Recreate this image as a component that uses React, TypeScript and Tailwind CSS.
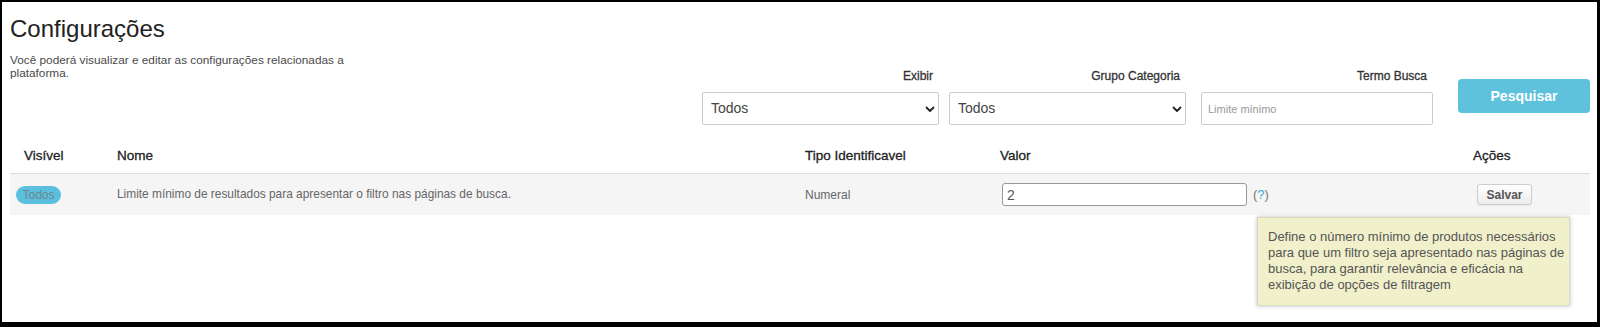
import { ChangeEvent, useState } from 'react';

interface Filter {
  label: string;
  width: string;
  kind: 'select' | 'input';
}

const filters: Filter[] = [
  { label: 'Exibir', width: 'w-[237px]', kind: 'select' },
  { label: 'Grupo Categoria', width: 'w-[237px]', kind: 'select' },
  { label: 'Termo Busca', width: 'w-[232px]', kind: 'input' },
];

function Chevron() {
  return (
    <svg
      className="pointer-events-none absolute right-[4px] top-[14px]"
      width="10"
      height="7"
      viewBox="0 0 10 7"
      fill="none"
    >
      <path d="M1.5 1.5 5 5l3.5-3.5" stroke="#222" strokeWidth="1.8" strokeLinecap="round" strokeLinejoin="round" />
    </svg>
  );
}

function FilterField({ filter }: { filter: Filter }) {
  return (
    <div className={`flex flex-col ${filter.width}`}>
      <label className="pr-[6px] text-right text-[12px] leading-4 font-normal text-[#333] [-webkit-text-stroke:0.3px_#333]">
        {filter.label}
      </label>
      <div className="relative mt-[8px]">
        {filter.kind === 'select' ? (
          <>
            <select className="h-[33px] w-full appearance-none rounded-[2px] border border-[#ccc] bg-white pl-[8px] text-[14px] font-normal text-[#444] outline-none">
              <option>Todos</option>
            </select>
            <Chevron />
          </>
        ) : (
          <input
            placeholder="Limite mínimo"
            className="h-[33px] w-full rounded-[2px] border border-[#ccc] bg-white pl-[6px] text-[11px] text-[#333] outline-none placeholder:text-[#999]"
          />
        )}
      </div>
    </div>
  );
}

export default function App() {
  const [valor, setValor] = useState('2');

  return (
    <div
      className="h-[327px] overflow-hidden border-t-2 border-l-2 border-r-[3px] border-b-[5px] border-black bg-white pl-[8px] pr-[7px] text-[#333]"
      style={{ fontFamily: '"Liberation Sans", Arial, sans-serif' }}
    >
      <h1 className="mt-[15px] text-[24px] leading-6 font-normal text-[#222]">Configurações</h1>

      <div className="flex items-start justify-between">
        <p className="mt-[13px] w-[350px] text-[11.8px] leading-[13px] text-[#4a4a4a]">
          Você poderá visualizar e editar as configurações relacionadas a plataforma.
        </p>

        <div className="mt-[27px] flex items-start">
          <FilterField filter={filters[0]} />
          <div className="ml-[10px]">
            <FilterField filter={filters[1]} />
          </div>
          <div className="ml-[15px]">
            <FilterField filter={filters[2]} />
          </div>
          <button className="ml-[25px] mt-[11px] h-[34px] w-[132px] rounded-[4px] bg-[#5fc2dd] text-[14px] font-bold text-white">
            Pesquisar
          </button>
        </div>
      </div>

      <div className="mt-[15px]">
        <div className="grid h-[34px] grid-cols-[99px_688px_195px_473px_1fr] items-center border-b border-[#ddd] text-[13.5px] font-normal text-[#222] [-webkit-text-stroke:0.3px_#222]">
          <div className="pl-[14px]">Visível</div>
          <div className="pl-[8px]">Nome</div>
          <div className="pl-[8px]">Tipo Identificavel</div>
          <div className="pl-[8px]">Valor</div>
          <div className="pl-[8px]">Ações</div>
        </div>

        <div className="relative grid h-[41px] grid-cols-[99px_688px_195px_473px_1fr] items-center bg-[#f5f5f5] text-[12px] text-[#666]">
          <div className="pl-[6px]">
            <span className="inline-flex h-[18px] w-[45px] items-center justify-center rounded-full bg-[#5bc0de] text-[12px] text-[#6a8790]">
              Todos
            </span>
          </div>
          <div className="pl-[8px] text-[11.9px]">
            Limite mínimo de resultados para apresentar o filtro nas páginas de busca.
          </div>
          <div className="pl-[8px]">Numeral</div>
          <div className="flex items-center pl-[10px]">
            <input
              value={valor}
              onChange={(e: ChangeEvent<HTMLInputElement>) => setValor(e.target.value)}
              className="h-[23px] w-[245px] rounded-[3px] border border-[#999] bg-white pl-[4px] text-[14px] text-[#555] outline-none"
            />
            <span className="ml-[6px] text-[13px] text-[#777]">
              (<span className="text-[#3ba9d3]">?</span>)
            </span>
          </div>
          <div className="pl-[12px]">
            <button className="h-[21px] w-[55px] rounded-[3px] border border-[#ccc] bg-gradient-to-b from-white to-[#ececec] text-[12px] font-bold text-[#555] shadow-[0_1px_1px_rgba(0,0,0,0.06)]">
              Salvar
            </button>
          </div>

          <div className="absolute left-[1247px] top-[43px] w-[313px] border border-[#d8d8c4] bg-[#f0f0cb] pl-[10px] pr-[3px] pt-[11px] pb-[12px] text-[13px] leading-4 text-[#555] shadow-[0_0_4px_rgba(0,0,0,0.25)]">
            Define o número mínimo de produtos necessários para que um filtro seja apresentado nas páginas de busca, para
            garantir relevância e eficácia na exibição de opções de filtragem
          </div>
        </div>
      </div>
    </div>
  );
}
